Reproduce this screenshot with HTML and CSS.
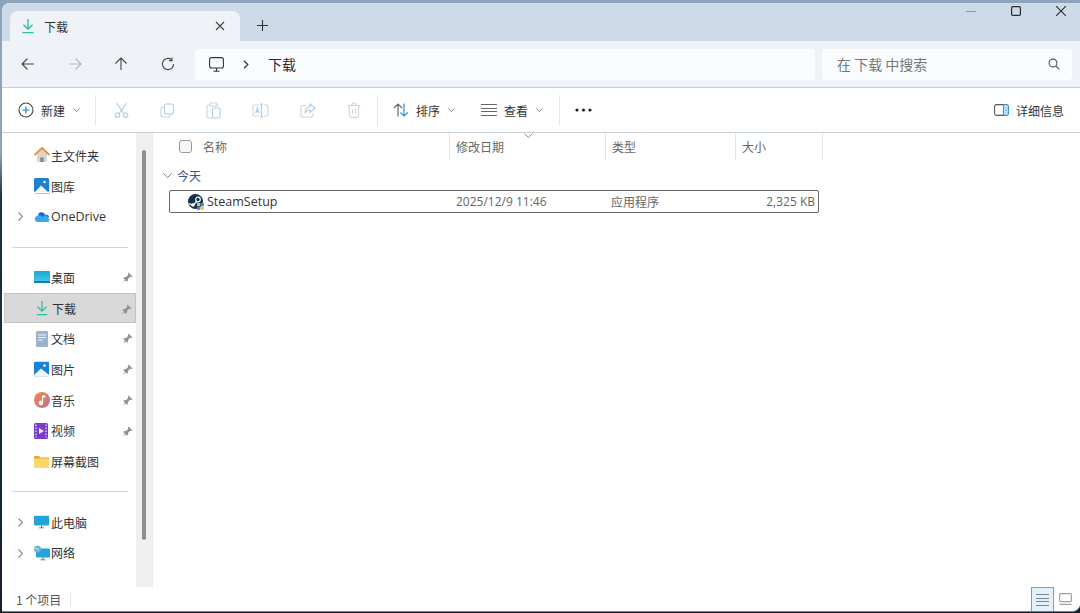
FILE: index.html
```html
<!DOCTYPE html>
<html>
<head>
  <title>下载 - 文件资源管理器</title>
  <link rel="stylesheet" href="styles.css">
</head>
<body>
  <div class="window">
    <!-- Title bar with tab -->
    <div class="titlebar">
      <div class="tab">
        <svg class="tab-icon" width="16" height="16" viewBox="0 0 16 16" fill="none" stroke="#2fc0a0" stroke-width="1.4"><path d="M8 1v10M3.5 6.8 8 11.2l4.5-4.4M2.5 14.6h11"/></svg>
        <span class="tab-title">下载</span>
        <svg class="tab-close" width="10" height="10" viewBox="0 0 10 10" stroke="#444" stroke-width="1.1"><path d="M1 1l8 8M9 1 1 9"/></svg>
      </div>
      <svg class="tab-add" width="11" height="11" viewBox="0 0 11 11" stroke="#333" stroke-width="1.1"><path d="M5.5 0v11M0 5.5h11"/></svg>
      <div class="win-controls">
        <svg width="10" height="10" viewBox="0 0 10 10" stroke="#8a96a3" stroke-width="1.2"><path d="M0 5.5h10"/></svg>
        <svg width="10" height="10" viewBox="0 0 10 10" fill="none" stroke="#2b2b2b" stroke-width="1.2"><rect x=".6" y=".6" width="8.8" height="8.8" rx="1.2"/></svg>
        <svg width="10" height="10" viewBox="0 0 10 10" stroke="#2b2b2b" stroke-width="1.1"><path d="M0 0l10 10M10 0 0 10"/></svg>
      </div>
    </div>

    <!-- Navigation bar -->
    <div class="navbar">
      <div class="nav-buttons">
        <svg width="14" height="14" viewBox="0 0 14 14" fill="none" stroke="#444" stroke-width="1.1"><path d="M13 7H1M6.5 1.5 1 7l5.5 5.5"/></svg>
        <svg width="14" height="14" viewBox="0 0 14 14" fill="none" stroke="#b4b9bf" stroke-width="1.1"><path d="M1 7h12M7.5 1.5 13 7l-5.5 5.5"/></svg>
        <svg width="14" height="14" viewBox="0 0 14 14" fill="none" stroke="#444" stroke-width="1.1"><path d="M7 13V1M1.5 6.5 7 1l5.5 5.5"/></svg>
        <svg width="14" height="14" viewBox="0 0 14 14" fill="none" stroke="#444" stroke-width="1.1"><path d="M12.6 7A5.6 5.6 0 1 1 10.6 2.7"/><path d="M11 .6v3h-3"/></svg>
      </div>
      <div class="address">
        <svg width="15" height="15" viewBox="0 0 15 15" fill="none" stroke="#333" stroke-width="1.1"><rect x=".6" y=".6" width="13.8" height="10.4" rx="2"/><path d="M7.5 11v3M4.5 14.2h6"/></svg>
        <svg class="crumb-arrow" width="6" height="9" viewBox="0 0 6 9" fill="none" stroke="#333" stroke-width="1.2"><path d="M1 .8 4.8 4.5 1 8.2"/></svg>
        <span class="crumb">下载</span>
      </div>
      <div class="search">
        <span>在 下载 中搜索</span>
        <svg width="12" height="12" viewBox="0 0 12 12" fill="none" stroke="#555" stroke-width="1.1"><circle cx="5" cy="5" r="3.9"/><path d="M8 8l3.4 3.4"/></svg>
      </div>
    </div>

    <!-- Command bar -->
    <div class="toolbar">
      <div class="tool tool-new">
        <svg width="16" height="16" viewBox="0 0 16 16" fill="none"><circle cx="8" cy="8" r="7" stroke="#444" stroke-width="1.1"/><path d="M8 4.4v7.2M4.4 8h7.2" stroke="#1a86d8" stroke-width="1.2"/></svg>
        <span>新建</span>
        <svg class="caret" width="7" height="4" viewBox="0 0 7 4" fill="none" stroke="#888"><path d="M.5.5l3 3 3-3"/></svg>
      </div>
      <div class="sep sep-new"></div>
      <div class="tool-group">
        <svg width="15" height="16" viewBox="0 0 15 16" fill="none" stroke="#a9cdec" stroke-width="1.1"><path d="M2.5 1l7.2 10.4M12.5 1 5.3 11.4"/><circle cx="3.4" cy="13.2" r="2.2"/><circle cx="11.6" cy="13.2" r="2.2"/></svg>
        <svg width="15" height="15" viewBox="0 0 15 15" fill="none" stroke-width="1.1"><rect x="1" y="4" width="9" height="10" rx="2" stroke="#cfd3d7"/><rect x="4.5" y="1" width="9" height="10" rx="2" fill="#fff" stroke="#a9cdec"/></svg>
        <svg width="15" height="17" viewBox="0 0 15 17" fill="none" stroke-width="1.1"><path d="M4 3H2.5A1.5 1.5 0 0 0 1 4.5v10A1.5 1.5 0 0 0 2.5 16H6M11 3h1.5" stroke="#cfd3d7"/><rect x="4" y="1" width="7" height="3" rx="1" stroke="#cfd3d7"/><rect x="6.5" y="6" width="7.5" height="10" rx="1.5" stroke="#a9cdec"/></svg>
        <svg width="17" height="15" viewBox="0 0 17 15" fill="none" stroke-width="1.1"><path d="M7 2H2.5A1.5 1.5 0 0 0 1 3.5v8A1.5 1.5 0 0 0 2.5 13H7M12 2h2.5A1.5 1.5 0 0 1 16 3.5v8a1.5 1.5 0 0 1-1.5 1.5H12" stroke="#cfd3d7"/><path d="M8 1h3M8 14h3M9.5 1v13M3.6 10.4 5.4 4.6l1.8 5.8M4.2 8.6h2.4" stroke="#a9cdec"/></svg>
        <svg width="16" height="15" viewBox="0 0 16 15" fill="none" stroke-width="1.1"><path d="M6 2.5H3A2 2 0 0 0 1 4.5v7.5a2 2 0 0 0 2 2h8a2 2 0 0 0 2-2v-2" stroke="#cfd3d7"/><path d="M10 1l5 4.2-5 4.2V7C7.500 7 5.800 8 5 10c0-3.500 1.800-6 5-6.300z" stroke="#a9cdec"/></svg>
        <svg width="14" height="16" viewBox="0 0 14 16" fill="none" stroke="#cfd3d7" stroke-width="1.1"><path d="M.5 3.500h13M5 3.500V2a1 1 0 0 1 1-1h2a1 1 0 0 1 1 1v1.500M2 3.500l.7 10.500a1.500 1.500 0 0 0 1.500 1.400h5.600a1.500 1.500 0 0 0 1.500-1.400L12 3.500M5.500 7v5M8.500 7v5"/></svg>
      </div>
      <div class="sep sep-edit"></div>
      <div class="tool tool-sort">
        <svg width="16" height="14" viewBox="0 0 16 14" fill="none" stroke-width="1.2"><path d="M5 13.500V1M1 5l4-4 4 4" stroke="#666"/><path d="M11 .5V13M7.500 9.500 11 13l4-3.500" stroke="#2a90dd"/></svg>
        <span>排序</span>
        <svg class="caret" width="7" height="4" viewBox="0 0 7 4" fill="none" stroke="#888"><path d="M.5.5l3 3 3-3"/></svg>
      </div>
      <div class="tool tool-view">
        <svg width="16" height="12" viewBox="0 0 16 12" stroke="#666" stroke-width="1"><path d="M0 .5h16M0 4.500h16M0 7.500h16M0 11.500h16"/></svg>
        <span>查看</span>
        <svg class="caret" width="7" height="4" viewBox="0 0 7 4" fill="none" stroke="#888"><path d="M.5.5l3 3 3-3"/></svg>
      </div>
      <div class="sep sep-view"></div>
      <svg class="more" width="17" height="4" viewBox="0 0 17 4" fill="#222"><circle cx="2" cy="2" r="1.600"/><circle cx="8.500" cy="2" r="1.600"/><circle cx="15" cy="2" r="1.600"/></svg>
      <div class="tool tool-details">
        <svg width="15" height="12" viewBox="0 0 15 12" fill="none" stroke-width="1.1"><path d="M9 .6H2.500A1.900 1.900 0 0 0 .6 2.500v7a1.900 1.900 0 0 0 1.900 1.900H9" stroke="#555"/><path d="M9.500.6h3a1.900 1.900 0 0 1 1.900 1.900v7a1.900 1.900 0 0 1-1.900 1.900h-3z" fill="#cfe6f8" stroke="#2a90dd"/><path d="M12 3.500v1M12 6v1M12 8.500v.5" stroke="#2a90dd"/></svg>
        <span>详细信息</span>
      </div>
    </div>

    <!-- Main area -->
    <div class="body">
      <div class="sidebar">
        <div class="nav-item">
          <svg class="item-icon" width="16" height="16" viewBox="0 0 16 16"><path d="M3 7v8h10V7L8 2.500z" fill="#d9d6d0"/><path d="M6.200 15v-4.500h3.600V15z" fill="#8d8a86"/><path d="M.5 8 8 1l7.500 7" fill="none" stroke="#e58a3a" stroke-width="1.800"/></svg>
          <span>主文件夹</span>
        </div>
        <div class="nav-item">
          <svg class="item-icon" width="16" height="16" viewBox="0 0 16 16"><rect y="0" width="15" height="14" rx="1.500" fill="#1f7fd0"/><path d="M1 15.500h15V2" fill="none" stroke="#a9c7e2"/><circle cx="10.500" cy="4" r="1.300" fill="#fff"/><path d="M1 14l6-6.500 7 6.500z" fill="#f1f6fb"/></svg>
          <span>图库</span>
        </div>
        <div class="nav-item">
          <svg class="expander" width="5" height="9" viewBox="0 0 5 9" fill="none" stroke="#8a8a8a" stroke-width="1.100"><path d="M.5.500 4.500 4.500l-4 4"/></svg>
          <svg class="item-icon" width="16" height="11" viewBox="0 0 16 11"><path d="M4 4a3.600 3.600 0 0 1 7-.8A3 3 0 0 1 15 6H7z" fill="#1f63d8"/><path d="M3.500 10.500A3 3 0 0 1 3 4.600 4 4 0 0 1 9 6a2.400 2.400 0 0 1 5 .6 2.200 2.200 0 0 1 1.500 2 2 2 0 0 1-2 1.900z" fill="#36a8ee"/></svg>
          <span class="latin">OneDrive</span>
        </div>
        <div class="divider"></div>
        <div class="nav-item">
          <svg class="item-icon" width="16" height="12" viewBox="0 0 16 12"><defs><linearGradient id="deskFill" x1="0" y1="0" x2="0" y2="1"><stop offset="0" stop-color="#1aa6d8"/><stop offset="1" stop-color="#48cbe6"/></linearGradient></defs><rect width="16" height="12" rx="1" fill="url(#deskFill)"/><rect y="10" width="16" height="2" fill="#0e7fb2"/></svg>
          <span>桌面</span>
          <svg class="pin" width="11" height="11" viewBox="0 0 11 11" fill="#8a929a"><path d="M6.500.5 10.500 4.500 9.500 5 8 4.800 6 7l-.2 2L5 9.700 1.300 6l.7-.8L4 5l2.200-2L6 1.500zM3 7.500 3.800 8.300.8 10.700z"/></svg>
        </div>
        <div class="nav-item selected">
          <svg class="item-icon" width="16" height="16" viewBox="0 0 16 16" fill="none" stroke="#2fc0a0" stroke-width="1.300"><path d="M8 1v10M3.500 6.800 8 11.200l4.500-4.400M2.800 14.600h10.400"/></svg>
          <span>下载</span>
          <svg class="pin" width="11" height="11" viewBox="0 0 11 11" fill="#8a929a"><path d="M6.500.5 10.500 4.500 9.500 5 8 4.800 6 7l-.2 2L5 9.700 1.300 6l.7-.8L4 5l2.200-2L6 1.500zM3 7.500 3.800 8.300.8 10.700z"/></svg>
        </div>
        <div class="nav-item">
          <svg class="item-icon" width="16" height="16" viewBox="0 0 16 16"><rect x="2" width="12" height="16" rx="1.200" fill="#9db3cd"/><path d="M4 4h8M4 6.500h8M4 9h5" stroke="#eef3f8"/></svg>
          <span>文档</span>
          <svg class="pin" width="11" height="11" viewBox="0 0 11 11" fill="#8a929a"><path d="M6.500.5 10.500 4.500 9.500 5 8 4.800 6 7l-.2 2L5 9.700 1.300 6l.7-.8L4 5l2.200-2L6 1.500zM3 7.500 3.800 8.300.8 10.700z"/></svg>
        </div>
        <div class="nav-item">
          <svg class="item-icon" width="15" height="15" viewBox="0 0 15 15"><rect width="15" height="15" rx="1.500" fill="#1683d8"/><circle cx="10.500" cy="4" r="1.300" fill="#fff"/><path d="M0 13.500 7 7l8 6.500V15H0z" fill="#f1f6fb"/></svg>
          <span>图片</span>
          <svg class="pin" width="11" height="11" viewBox="0 0 11 11" fill="#8a929a"><path d="M6.500.5 10.500 4.500 9.500 5 8 4.800 6 7l-.2 2L5 9.700 1.300 6l.7-.8L4 5l2.200-2L6 1.500zM3 7.500 3.800 8.300.8 10.700z"/></svg>
        </div>
        <div class="nav-item">
          <svg class="item-icon" width="16" height="16" viewBox="0 0 16 16"><defs><linearGradient id="musicFill" x1="0" y1="0" x2="1" y2="1"><stop offset="0" stop-color="#ee8a4a"/><stop offset="1" stop-color="#c76a9a"/></linearGradient></defs><circle cx="8" cy="8" r="8" fill="url(#musicFill)"/><path d="M8 3.500h3.500v2H9.200v5.500a2.200 2.200 0 1 1-1.200-2z" fill="#fff"/></svg>
          <span>音乐</span>
          <svg class="pin" width="11" height="11" viewBox="0 0 11 11" fill="#8a929a"><path d="M6.500.5 10.500 4.500 9.500 5 8 4.800 6 7l-.2 2L5 9.700 1.300 6l.7-.8L4 5l2.200-2L6 1.500zM3 7.500 3.800 8.300.8 10.700z"/></svg>
        </div>
        <div class="nav-item">
          <svg class="item-icon" width="15" height="16" viewBox="0 0 15 16"><rect width="14" height="16" rx="1.500" fill="#7a3bd0"/><path d="M2 1.500v13M12 1.500v13" stroke="#d7c4f2" stroke-width="1.500" stroke-dasharray="1.500 1.500"/><path d="M5 5l5 3-5 3z" fill="#f3ecfc"/></svg>
          <span>视频</span>
          <svg class="pin" width="11" height="11" viewBox="0 0 11 11" fill="#8a929a"><path d="M6.500.5 10.500 4.500 9.500 5 8 4.800 6 7l-.2 2L5 9.700 1.300 6l.7-.8L4 5l2.200-2L6 1.500zM3 7.500 3.800 8.300.8 10.700z"/></svg>
        </div>
        <div class="nav-item">
          <svg class="item-icon" width="15" height="12" viewBox="0 0 15 12"><path d="M0 1a1 1 0 0 1 1-1h4l1.500 1.500H15V3H0z" fill="#e8a92c"/><rect y="2.500" width="15" height="9.500" rx="1" fill="#fcd56b"/></svg>
          <span>屏幕截图</span>
        </div>
        <div class="divider"></div>
        <div class="nav-item">
          <svg class="expander" width="5" height="9" viewBox="0 0 5 9" fill="none" stroke="#8a8a8a" stroke-width="1.100"><path d="M.5.500 4.500 4.500l-4 4"/></svg>
          <svg class="item-icon" width="15" height="13" viewBox="0 0 15 13"><rect width="15" height="10" rx="1" fill="#22a5d6"/><path d="M5 12.500h5" stroke="#4b6b80"/><path d="M7.500 10v2.500" stroke="#4b6b80"/></svg>
          <span>此电脑</span>
        </div>
        <div class="nav-item">
          <svg class="expander" width="5" height="9" viewBox="0 0 5 9" fill="none" stroke="#8a8a8a" stroke-width="1.100"><path d="M.5.500 4.500 4.500l-4 4"/></svg>
          <svg class="item-icon" width="16" height="15" viewBox="0 0 16 15"><rect x="2" y="3" width="14" height="9" rx="1" fill="#22a5d6"/><path d="M6.500 14.500h5M9 12v2.500" stroke="#4b6b80"/><circle cx="3.500" cy="3.500" r="3.500" fill="#6fb2e0"/><path d="M1 2.500c1.500 0 2 1.500 3.500 1.500" stroke="#e8f2fa" fill="none"/></svg>
          <span>网络</span>
        </div>
      </div>
      <div class="nav-scroll"><div class="nav-thumb"></div></div>

      <div class="files">
        <svg class="sort-mark" width="9" height="5" viewBox="0 0 9 5" fill="none" stroke="#888"><path d="M.5.500l4 4 4-4"/></svg>
        <div class="file-head">
          <div class="col col-name"><span class="check"></span>名称</div>
          <div class="col">修改日期</div>
          <div class="col">类型</div>
          <div class="col">大小</div>
        </div>
        <div class="group">
          <svg width="9" height="5" viewBox="0 0 9 5" fill="none" stroke="#7a7a7a"><path d="M.5.500l4 4 4-4"/></svg>
          <span>今天</span>
        </div>
        <div class="file-row">
          <div class="file-name">
            <svg width="16" height="16" viewBox="0 0 16 16"><circle cx="7.500" cy="7.500" r="7.500" fill="#14304f"/><circle cx="10" cy="5.500" r="2.300" fill="none" stroke="#fff" stroke-width="1.200"/><path d="M.8 9.500 5 11.200l4-4" stroke="#fff" stroke-width="1.300" fill="none"/><circle cx="5" cy="11" r="1.800" fill="#fff"/><rect x="9" y="9" width="3.200" height="3.200" fill="#f4c20d"/><rect x="12.600" y="9" width="3.200" height="3.200" fill="#2a90dd"/><rect x="9" y="12.600" width="3.200" height="3.200" fill="#2a90dd"/><rect x="12.600" y="12.600" width="3.200" height="3.200" fill="#f4c20d"/></svg>
            <span>SteamSetup</span>
          </div>
          <div class="file-meta">2025/12/9 11:46</div>
          <div class="file-meta">应用程序</div>
          <div class="file-meta file-size">2,325 KB</div>
        </div>
      </div>
    </div>

    <!-- Status bar -->
    <div class="statusbar">
      <span class="status-text">1 个项目</span>
      <div class="status-sep"></div>
      <div class="view-switch">
        <div class="view-btn active">
          <svg width="13" height="12" viewBox="0 0 13 12" stroke="#7d858c" stroke-width="1"><path d="M0 .5h13M0 4.500h13M0 7.500h13M0 11.500h13"/></svg>
        </div>
        <div class="view-btn">
          <svg width="13" height="12" viewBox="0 0 13 12" fill="none" stroke="#a3a3a3" stroke-width="1.200"><rect x=".6" y=".6" width="11.800" height="8" rx="1"/><path d="M.5 11.400h12"/></svg>
        </div>
      </div>
    </div>
  </div>
</body>
</html>
```

FILE: styles.css
```css
* {
  box-sizing: border-box;
}
html,
body {
  height: 100%;
  margin: 0;
  overflow: hidden;
}
body {
  padding: 3px 0 1px 2px;
  background: linear-gradient(#8fa3bd 0, #8fa3bd 25%, #1d3246 32%, #15202c 100%);
  font-family: "Noto Sans CJK SC", "Noto Sans", sans-serif;
  font-size: 12px;
  color: #333;
}
svg {
  display: block;
  flex: none;
}
.window {
  height: 100%;
  display: flex;
  flex-direction: column;
  background: #fff;
  border-radius: 8px 0 8px 0;
  border-bottom: 1px solid #6e7f90;
  overflow: hidden;
}

/* title bar */
.titlebar {
  height: 38px;
  flex: none;
  display: flex;
  align-items: flex-end;
  padding-left: 8px;
  background: #cddbe9;
}
.tab {
  width: 230px;
  height: 30px;
  display: flex;
  align-items: center;
  padding: 0 15px 0 10px;
  background: #eff3f8;
  border-radius: 8px 8px 0 0;
}
.tab-title {
  margin-left: 8px;
  font-size: 12px;
}
.tab-close {
  margin-left: auto;
}
.tab-add {
  margin: 0 0 10px 17px;
}
.win-controls {
  margin-left: auto;
  display: flex;
  gap: 35px;
  padding: 0 14px 25px 0;
}

/* navigation bar */
.navbar {
  height: 47px;
  flex: none;
  display: flex;
  align-items: center;
  padding: 0 8px 0 19px;
  background: #eff3f8;
  border-bottom: 1px solid #c5d0da;
}
.nav-buttons {
  width: 174px;
  display: flex;
  gap: 32.500px;
}
.address {
  width: 620px;
  height: 31px;
  display: flex;
  align-items: center;
  padding-left: 14px;
  background: #fbfcfe;
  border-radius: 4px;
}
.crumb-arrow {
  margin-left: 19px;
}
.crumb {
  margin-left: 19px;
  font-size: 14px;
  color: #2b2b2b;
}
.search {
  width: 250px;
  height: 31px;
  margin-left: 7px;
  display: flex;
  align-items: center;
  justify-content: space-between;
  padding: 0 12px 0 15px;
  background: #fbfcfe;
  border-radius: 4px;
  font-size: 14px;
  color: #777;
}

/* command bar */
.toolbar {
  height: 45px;
  flex: none;
  display: flex;
  align-items: center;
  padding-left: 16px;
  background: #fff;
  border-bottom: 1px solid #c5d0da;
}
.tool {
  display: flex;
  align-items: center;
  gap: 7px;
  color: #333;
}
.caret {
  margin-left: 1px;
}
.sep {
  width: 1px;
  height: 31px;
  background: #e6e8ea;
}
.sep-new {
  margin-left: 15px;
}
.tool-group {
  width: 281px;
  display: flex;
  align-items: center;
  gap: 31px;
  padding-left: 18px;
}
.tool-sort {
  margin-left: 15px;
}
.tool-view {
  margin-left: 26px;
}
.sep-view {
  margin-left: 16px;
}
.more {
  margin-left: 15px;
}
.tool-details {
  margin-left: auto;
  padding-right: 16px;
}

/* sidebar */
.body {
  flex: 1;
  min-height: 0;
  display: flex;
}
.sidebar {
  width: 134px;
  flex: none;
  padding-top: 7px;
}
.nav-item {
  position: relative;
  height: 30.700px;
  display: flex;
  align-items: center;
  padding-left: 49px;
  color: #333;
}
.nav-item.selected {
  margin-left: 2px;
  padding-left: 47px;
  background: #d9d9d9;
  border: 1px solid #c4c4c4;
}
.item-icon {
  position: absolute;
  left: 32px;
  top: 50%;
  transform: translateY(-50%);
}
.selected .item-icon {
  left: 29px;
}
.expander {
  position: absolute;
  left: 16px;
  top: 11px;
}
.pin {
  position: absolute;
  right: 3px;
  top: 10px;
}
.latin {
  font-family: "Open Sans", sans-serif;
  font-size: 12.500px;
}
.divider {
  height: 30px;
  margin: 0 8px 0 10px;
  display: flex;
  align-items: center;
}
.divider::before {
  content: "";
  flex: 1;
  height: 1px;
  background: #d5d5d5;
}
.nav-scroll {
  width: 16px;
  flex: none;
  padding: 17px 6px 47px;
  background: #f0f0f0;
}
.nav-thumb {
  width: 4px;
  height: 390px;
  background: #8d8d8d;
  border-radius: 2px;
}

/* file list */
.files {
  position: relative;
  flex: 1;
  border-left: 1px solid #ededed;
}
.sort-mark {
  position: absolute;
  left: 371px;
  top: 0;
}
.file-head {
  height: 27px;
  display: grid;
  grid-template-columns: 297px 156px 130px 87px;
  color: #666;
}
.col {
  display: flex;
  align-items: center;
  padding-left: 6px;
  border-right: 1px solid #e5e5e5;
}
.col-name {
  padding-left: 26px;
}
.check {
  width: 13px;
  height: 13px;
  margin-right: 11px;
  background: #f7f7f7;
  border: 1px solid #9a9a9a;
  border-radius: 3px;
}
.group {
  height: 30px;
  display: flex;
  align-items: center;
  gap: 5px;
  padding-left: 10px;
  color: #42528f;
}
.file-row {
  width: 650px;
  height: 23px;
  margin-left: 16px;
  display: grid;
  grid-template-columns: 280px 155px 130px 1fr;
  align-items: center;
  border: 1px solid #666;
  border-radius: 2px;
  color: #666;
}
.file-name {
  display: flex;
  align-items: center;
  gap: 3px;
  padding-left: 18px;
  font-family: "Open Sans", sans-serif;
  font-size: 12.500px;
  color: #333;
}
.file-meta {
  padding-left: 6px;
  font-family: "Open Sans", "Noto Sans CJK SC", sans-serif;
}
.file-size {
  padding-right: 3px;
  text-align: right;
}

/* status bar */
.statusbar {
  height: 24px;
  flex: none;
  display: flex;
  align-items: center;
  padding-left: 14px;
  background: #fff;
}
.status-text {
  color: #555;
}
.status-sep {
  width: 1px;
  height: 14px;
  margin-left: 9px;
  background: #e8e8e8;
}
.view-switch {
  margin-left: auto;
  height: 100%;
  display: flex;
}
.view-btn {
  width: 23px;
  display: flex;
  align-items: center;
  justify-content: center;
}
.view-btn.active {
  background: #e3f1fa;
  border: 1px solid #5aa7dd;
  border-bottom: none;
}
.view-btn:last-child {
  margin-right: 3px;
}
```
